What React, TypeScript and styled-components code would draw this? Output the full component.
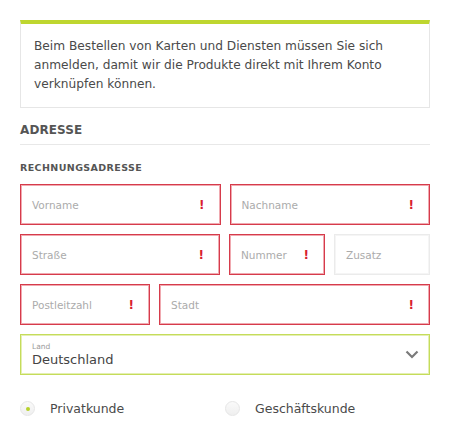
import React from "react";
import styled, { createGlobalStyle, css } from "styled-components";

const Global = createGlobalStyle`
  html, body { margin: 0; padding: 0; background: #fff; }
  body { font-family: "DejaVu Sans", "Liberation Sans", sans-serif; color: #444; }
  * { box-sizing: border-box; }
`;

const Page = styled.div`
  width: 450px;
  padding: 20px 20px 0 20px;
  display: flex;
  flex-direction: column;
`;

const Notice = styled.div`
  border: 1px solid #e6e6e6;
  border-top: 4px solid #bed62f;
  padding: 13px 13px 13px 13px;
  font-size: 12.2px;
  line-height: 19px;
  color: #4a4a4a;
  height: 88px;
`;

const SectionTitle = styled.h2`
  margin: 15px 0 0 0;
  font-size: 12px;
  font-weight: bold;
  color: #555;
  letter-spacing: 0.1px;
  line-height: 14px;
  padding-bottom: 7px;
  border-bottom: 1px solid #e8e8e8;
`;

const SubTitle = styled.h3`
  margin: 17px 0 0 0;
  font-size: 9.5px;
  line-height: 12px;
  font-weight: bold;
  color: #555;
  letter-spacing: 0.4px;
`;

const Row = styled.div<{ $cols: string; $first?: boolean }>`
  display: grid;
  grid-template-columns: ${(p) => p.$cols};
  gap: 9px;
  margin-top: ${(p) => (p.$first ? "10px" : "9px")};
`;

const Field = styled.div<{ $error?: boolean }>`
  height: 41px;
  display: flex;
  align-items: center;
  justify-content: space-between;
  padding: 0 15px 0 11px;
  font-size: 10.5px;
  color: #ababab;
  ${(p) =>
    p.$error
      ? css`
          border: 1px solid #d63b4b;
          box-shadow: inset 0 0 0 1px #f0a9b0;
        `
      : css`
          border: 1px solid #ebebeb;
          box-shadow: inset 0 0 0 1px #f5f5f5;
        `}
`;

const Bang = styled.span`
  color: #d8202e;
  font-weight: bold;
  font-size: 12px;
`;

const Select = styled.div`
  margin-top: 9px;
  height: 41px;
  border: 1px solid #c5dc5a;
  box-shadow: inset 0 0 0 1px #e4efb3;
  display: flex;
  align-items: center;
  justify-content: space-between;
  padding: 0 10px 0 11px;
`;

const SelectText = styled.div`
  display: flex;
  flex-direction: column;
`;

const SelectLabel = styled.span`
  font-size: 7.5px;
  color: #9a9a9a;
  line-height: 9px;
`;

const SelectValue = styled.span`
  font-size: 13px;
  color: #444;
  line-height: 17px;
`;

const Radios = styled.div`
  margin-top: 26px;
  display: grid;
  grid-template-columns: 205px 1fr;
`;

const RadioItem = styled.label`
  display: flex;
  align-items: center;
  gap: 15px;
  font-size: 12.5px;
  color: #4a4a4a;
`;

const Circle = styled.span<{ $on?: boolean }>`
  width: 15px;
  height: 15px;
  border-radius: 50%;
  border: 1px solid #e6e6e6;
  background: linear-gradient(#fafafa, #efefef);
  display: flex;
  align-items: center;
  justify-content: center;
  &::after {
    content: "";
    width: 4px;
    height: 4px;
    border-radius: 50%;
    background: ${(p) => (p.$on ? "#b6d12a" : "transparent")};
  }
`;

const Chevron = () => (
  <svg width="14" height="9" viewBox="0 0 14 9">
    <path d="M1.5 1.5 L7 7 L12.5 1.5" fill="none" stroke="#7a7a7a" strokeWidth="2.2" />
  </svg>
);

const Input = ({ label, error }: { label: string; error?: boolean }) => (
  <Field $error={error}>
    <span>{label}</span>
    {error && <Bang>!</Bang>}
  </Field>
);

export default function App() {
  return (
    <>
      <Global />
      <Page>
        <Notice>
          Beim Bestellen von Karten und Diensten müssen Sie sich anmelden, damit wir die Produkte direkt mit Ihrem Konto
          verknüpfen können.
        </Notice>
        <SectionTitle>ADRESSE</SectionTitle>
        <SubTitle>RECHNUNGSADRESSE</SubTitle>
        <Row $cols="1fr 1fr" $first>
          <Input label="Vorname" error />
          <Input label="Nachname" error />
        </Row>
        <Row $cols="200px 96px 1fr">
          <Input label="Straße" error />
          <Input label="Nummer" error />
          <Input label="Zusatz" />
        </Row>
        <Row $cols="130px 1fr">
          <Input label="Postleitzahl" error />
          <Input label="Stadt" error />
        </Row>
        <Select>
          <SelectText>
            <SelectLabel>Land</SelectLabel>
            <SelectValue>Deutschland</SelectValue>
          </SelectText>
          <Chevron />
        </Select>
        <Radios>
          <RadioItem>
            <Circle $on />
            Privatkunde
          </RadioItem>
          <RadioItem>
            <Circle />
            Geschäftskunde
          </RadioItem>
        </Radios>
      </Page>
    </>
  );
}
